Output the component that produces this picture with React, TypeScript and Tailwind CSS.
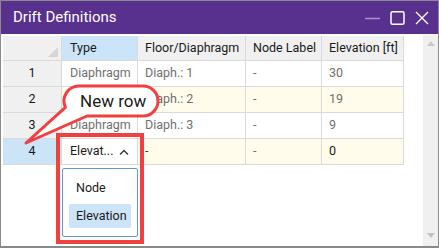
import React from "react";

const cols = [59, 76, 108, 76, 82];

const rows = [
  { n: "1", type: "Diaphragm", floor: "Diaph.: 1", node: "-", elev: "30", alt: false },
  { n: "2", type: "Diaphragm", floor: "Diaph.: 2", node: "-", elev: "19", alt: true },
  { n: "3", type: "Diaphragm", floor: "Diaph.: 3", node: "-", elev: "9", alt: false },
];

export default function App() {
  return (
    <div
      className="relative w-[439px] h-[248px] overflow-hidden bg-white border border-[#8a8a8a] border-b-2 flex flex-col"
      style={{ fontFamily: 'Roboto, "Noto Sans", sans-serif' }}
    >
      {/* Title bar */}
      <div className="h-[33px] shrink-0 bg-[#58308e] flex items-center pl-[12px] pr-[9px]">
        <span className="text-white text-[15px] leading-none">Drift Definitions</span>
        <div className="ml-auto flex items-center gap-[10px]">
          <svg width="15" height="14" viewBox="0 0 15 14">
            <line x1="0" y1="7.5" x2="15" y2="7.5" stroke="#a993c8" strokeWidth="1.5" />
          </svg>
          <svg width="15" height="14" viewBox="0 0 15 14">
            <rect x="1" y="0.75" width="13" height="12.5" rx="1.5" fill="none" stroke="#ffffff" strokeWidth="1.5" />
          </svg>
          <svg width="14" height="14" viewBox="0 0 14 14">
            <path d="M1 1 L13 13 M13 1 L1 13" stroke="#ffffff" strokeWidth="1.4" />
          </svg>
        </div>
      </div>

      {/* Body */}
      <div className="flex flex-1 pt-[1px]">
        <div className="flex-1 pl-[2px] pt-[1px]">
          <div
            className="grid text-[12.5px] leading-none whitespace-nowrap"
            style={{ gridTemplateColumns: cols.map((c) => `${c}px`).join(" ") }}
          >
            {/* header */}
            <div className="relative h-[25px] bg-[#f0f0f0] border-r border-b border-[#dadada]">
              <svg className="absolute right-[3px] bottom-[3px]" width="10" height="10" viewBox="0 0 10 10">
                <polygon points="10,0 10,10 0,10" fill="#d6d6d6" />
              </svg>
            </div>
            <div className="h-[25px] bg-[#cce4f7] border-r border-b border-[#dadada] flex items-center pl-[8px] text-[#1a1a1a]">Type</div>
            <div className="h-[25px] bg-[#f0f0f0] border-r border-b border-[#dadada] flex items-center pl-[7px] text-[#1a1a1a] overflow-hidden">Floor/Diaphragm</div>
            <div className="h-[25px] bg-[#f0f0f0] border-r border-b border-[#dadada] flex items-center pl-[7px] text-[#1a1a1a]">Node Label</div>
            <div className="h-[25px] bg-[#f0f0f0] border-r border-b border-[#dadada] flex items-center pl-[7px] text-[#1a1a1a]">Elevation [ft]</div>

            {rows.map((r) => {
              const bg = r.alt ? "bg-[#fffcec]" : "bg-white";
              return (
                <React.Fragment key={r.n}>
                  <div className="h-[26px] bg-[#f0f0f0] border-r border-b border-[#dadada] flex items-center justify-center text-[#1a1a1a]">{r.n}</div>
                  <div className={`h-[26px] ${bg} border-r border-b border-[#dadada] flex items-center pl-[8px] text-[#707070]`}>{r.type}</div>
                  <div className={`h-[26px] ${bg} border-r border-b border-[#dadada] flex items-center pl-[7px] text-[#707070]`}>{r.floor}</div>
                  <div className={`h-[26px] ${bg} border-r border-b border-[#dadada] flex items-center pl-[7px] text-[#707070]`}>{r.node}</div>
                  <div className={`h-[26px] ${bg} border-r border-b border-[#dadada] flex items-center pl-[7px] text-[#707070]`}>{r.elev}</div>
                </React.Fragment>
              );
            })}

            {/* row 4 */}
            <div className="h-[26px] bg-[#cce4f7] border-r border-b border-[#dadada] flex items-center justify-center text-[#1a1a1a]">4</div>
            <div className="h-[26px] bg-white border-r border-b border-[#dadada] flex items-center pl-[8px] pr-[8px] text-[#1a1a1a]">
              <span>Elevat...</span>
              <svg className="ml-auto" width="10" height="6" viewBox="0 0 10 6">
                <path d="M1 5.5 L5 1.5 L9 5.5" fill="none" stroke="#333" strokeWidth="1.3" />
              </svg>
            </div>
            <div className="h-[26px] bg-[#fffcec] border-r border-b border-[#dadada] flex items-center pl-[7px] text-[#444]">-</div>
            <div className="h-[26px] bg-[#fffcec] border-r border-b border-[#dadada] flex items-center pl-[7px] text-[#707070]">-</div>
            <div className="h-[26px] bg-[#fffcec] border-r border-b border-[#dadada] flex items-center pl-[7px] text-[#1a1a1a]">0</div>
          </div>
        </div>

        {/* Scrollbar */}
        <div className="w-[15px] bg-[#f0f0f0] flex flex-col items-center justify-between pt-[6px] pb-[8px]">
          <svg width="8" height="5" viewBox="0 0 8 5">
            <polygon points="0,5 4,0 8,5" fill="#c9c9c9" />
          </svg>
          <svg width="8" height="5" viewBox="0 0 8 5">
            <polygon points="0,0 8,0 4,5" fill="#c2c2c2" />
          </svg>
        </div>
      </div>

      {/* Dropdown list */}
      <div className="absolute left-[61px] top-[167px] w-[76px] h-[69px] bg-white border border-[#5b9bd5] rounded-[2px] text-[12.5px] leading-none text-[#1a1a1a] flex flex-col px-[6px] pt-[7px]">
        <div className="h-[24px] flex items-center pl-[7px]">Node</div>
        <div className="h-[24px] mt-[4px] flex items-center pl-[7px] bg-[#cce4f7] rounded-[2px]">Elevation</div>
      </div>

      {/* Red highlight rectangle */}
      <div className="absolute left-[55px] top-[132px] w-[88px] h-[111px] border-[4px] border-[#f0403f]" />

      {/* Callout */}
      <svg className="absolute left-0 top-0" width="439" height="248" viewBox="0 0 439 248">
        <path
          d="M78 85 H142 A15 15 0 0 1 142 115 H86 L25 142 L64.4 106.3 A15 15 0 0 1 78 85 Z"
          fill="#ffffff"
          stroke="#f0403f"
          strokeWidth="3"
          strokeLinejoin="round"
        />
      </svg>
      <div className="absolute left-[79px] top-[89px] w-[62px] text-center text-[17px] leading-[22px] text-[#1a1a1a] whitespace-nowrap">New row</div>
    </div>
  );
}
